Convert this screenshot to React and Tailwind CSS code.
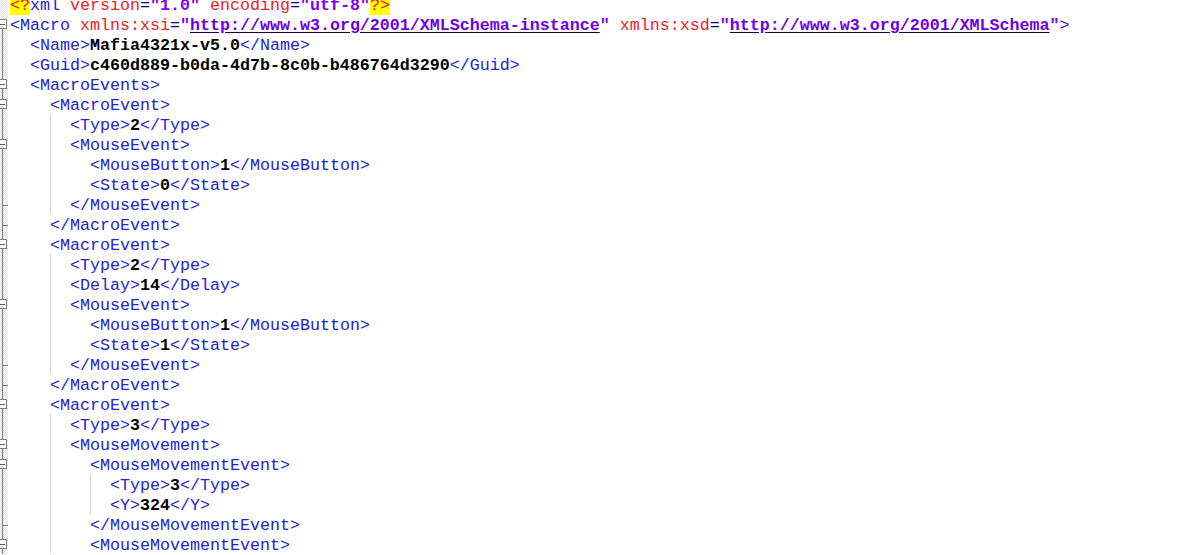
import React from 'react';

const C = {
  tag: 'text-[#2222d8]',
  attr: 'text-[#ee2222]',
  eq: 'text-[#000080]',
  str: 'text-[#8000ff] font-bold',
  url: 'text-[#6e00e8] font-bold underline decoration-[#1a0040] underline-offset-[2px]',
  val: 'text-black font-bold',
  decl: 'text-[#ff0000] bg-[#ffff00]',
  txt: 'text-black',
};

// [indent, fold, tokens]
const LINES = [
  [0, 'none', [['decl', '<?'], ['tag', 'xml'], ['txt', ' '], ['attr', 'version'], ['eq', '='], ['str', '"1.0"'], ['txt', ' '], ['attr', 'encoding'], ['eq', '='], ['str', '"utf-8"'], ['decl', '?>']]],
  [0, 'first', [
    ['tag', '<Macro'], ['txt', ' '], ['attr', 'xmlns:xsi'], ['eq', '='], ['str', '"'], ['url', 'http://www.w3.org/2001/XMLSchema-instance'], ['str', '"'],
    ['txt', ' '], ['attr', 'xmlns:xsd'], ['eq', '='], ['str', '"'], ['url', 'http://www.w3.org/2001/XMLSchema'], ['str', '"'], ['tag', '>'],
  ]],
  [2, 'mid', [['tag', '<Name>'], ['val', 'Mafia4321x-v5.0'], ['tag', '</Name>']]],
  [2, 'mid', [['tag', '<Guid>'], ['val', 'c460d889-b0da-4d7b-8c0b-b486764d3290'], ['tag', '</Guid>']]],
  [2, 'box', [['tag', '<MacroEvents>']]],
  [4, 'box', [['tag', '<MacroEvent>']]],
  [6, 'mid', [['tag', '<Type>'], ['val', '2'], ['tag', '</Type>']]],
  [6, 'box', [['tag', '<MouseEvent>']]],
  [8, 'mid', [['tag', '<MouseButton>'], ['val', '1'], ['tag', '</MouseButton>']]],
  [8, 'mid', [['tag', '<State>'], ['val', '0'], ['tag', '</State>']]],
  [6, 'end', [['tag', '</MouseEvent>']]],
  [4, 'end', [['tag', '</MacroEvent>']]],
  [4, 'box', [['tag', '<MacroEvent>']]],
  [6, 'mid', [['tag', '<Type>'], ['val', '2'], ['tag', '</Type>']]],
  [6, 'mid', [['tag', '<Delay>'], ['val', '14'], ['tag', '</Delay>']]],
  [6, 'box', [['tag', '<MouseEvent>']]],
  [8, 'mid', [['tag', '<MouseButton>'], ['val', '1'], ['tag', '</MouseButton>']]],
  [8, 'mid', [['tag', '<State>'], ['val', '1'], ['tag', '</State>']]],
  [6, 'end', [['tag', '</MouseEvent>']]],
  [4, 'end', [['tag', '</MacroEvent>']]],
  [4, 'box', [['tag', '<MacroEvent>']]],
  [6, 'mid', [['tag', '<Type>'], ['val', '3'], ['tag', '</Type>']]],
  [6, 'box', [['tag', '<MouseMovement>']]],
  [8, 'box', [['tag', '<MouseMovementEvent>']]],
  [10, 'mid', [['tag', '<Type>'], ['val', '3'], ['tag', '</Type>']]],
  [10, 'mid', [['tag', '<Y>'], ['val', '324'], ['tag', '</Y>']]],
  [8, 'end', [['tag', '</MouseMovementEvent>']]],
  [8, 'box', [['tag', '<MouseMovementEvent>']]],
];

function FoldMark({ kind }) {
  const stroke = '#808080';
  return (
    <svg width="8" height="20" viewBox="0 0 8 20" className="block">
      {kind === 'mid' && <line x1="2.5" y1="0" x2="2.5" y2="20" stroke={stroke} />}
      {kind === 'end' && (
        <>
          <line x1="2.5" y1="0" x2="2.5" y2="20" stroke={stroke} />
          <line x1="2.5" y1="11.5" x2="8" y2="11.5" stroke={stroke} />
        </>
      )}
      {(kind === 'box' || kind === 'first') && (
        <>
          {kind === 'box' && <line x1="2.5" y1="0" x2="2.5" y2="6" stroke={stroke} />}
          <line x1="2.5" y1="14" x2="2.5" y2="20" stroke={stroke} />
          <rect x="-2.5" y="5.5" width="9" height="9" fill="#fff" stroke={stroke} />
          <line x1="0" y1="10.5" x2="5" y2="10.5" stroke="#606060" />
        </>
      )}
    </svg>
  );
}

function Indent({ n }) {
  if (!n) return null;
  const first = Math.min(n, 4);
  const parts = [];
  let col = 4;
  while (col < n) {
    parts.push(Math.min(4, n - col));
    col += 4;
  }
  return (
    <>
      <span className="shrink-0" style={{ width: first * 10 }} />
      {parts.map((w, i) => (
        <span key={i} className="shrink-0 h-full border-l border-[#d2d2d2]" style={{ width: w * 10 }} />
      ))}
    </>
  );
}

export default function App() {
  return (
    <div className="h-[555px] w-[1189px] overflow-hidden bg-white">
      <div className="-mt-[6px]">
        {LINES.map(([indent, fold, tokens], i) => (
          <div key={i} className="flex h-[20px] items-stretch">
            <div className="w-[8px] shrink-0 bg-[repeating-conic-gradient(#e2e2e2_0%_25%,#ffffff_0%_50%)] bg-[length:2px_2px]">
              <FoldMark kind={fold} />
            </div>
            <div className="w-[2px] shrink-0" />
            <Indent n={indent} />
            <div className="whitespace-pre pt-[3px] font-['Liberation_Mono','Courier_New',monospace] text-[16.667px] leading-[17px]">
              {tokens.map(([t, s], j) => (
                <span key={j} className={C[t]}>{s}</span>
              ))}
            </div>
          </div>
        ))}
      </div>
    </div>
  );
}
